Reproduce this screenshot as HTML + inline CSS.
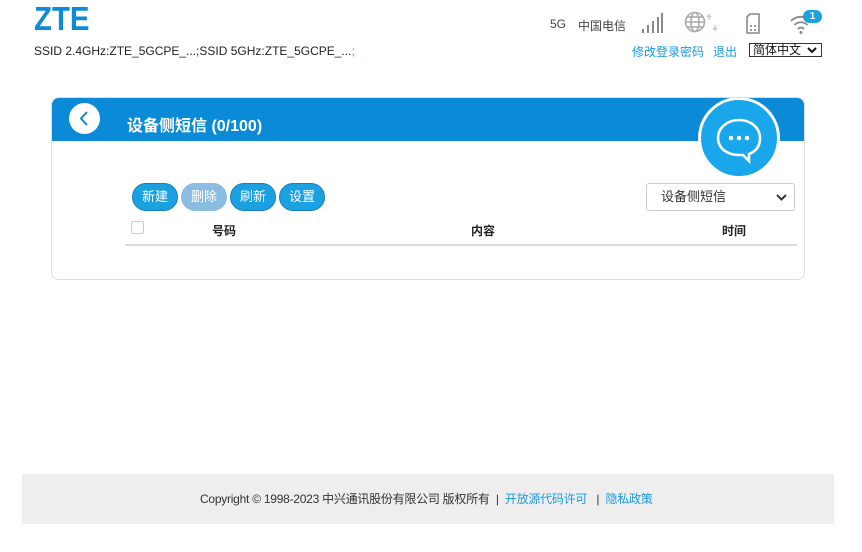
<!DOCTYPE html>
<html><head><meta charset="utf-8"><style>
*{margin:0;padding:0;box-sizing:border-box}
body{width:862px;height:552px;background:#fff;font-family:"Liberation Sans","Noto Sans CJK SC",sans-serif;position:relative;overflow:hidden;color:#333}
.a{position:absolute}
.logo{left:34px;top:0px;font-size:33px;line-height:38px;font-weight:bold;color:#0e8bd6;font-family:"Liberation Sans",sans-serif;transform:scaleX(0.89);transform-origin:left}
.ssid{left:34px;top:44px;font-size:12px;color:#222}
.ssid span{color:#1a9ae0}
.top{font-size:12px;color:#444}
.lk{font-size:12px;color:#1a9ae0}
.card{left:51px;top:97px;width:754px;height:183px;border:1px solid #ddd;border-radius:8px;overflow:hidden}
.hdr{left:0;top:0;width:754px;height:43px;background:#0b8bd7}
.btn{top:183px;height:28px;border-radius:14px;background:#1ba0e2;color:#fff;font-size:13px;text-align:center;line-height:26px;border:1px solid #1380c0}
</style></head><body>
<div class="a logo">ZTE</div>
<div class="a ssid">SSID 2.4GHz:ZTE_5GCPE_...;SSID 5GHz:ZTE_5GCPE_...<span>;</span></div>
<div class="a top" style="left:550px;top:17px">5G</div>
<div class="a top" style="left:578px;top:17px">中国电信</div>
<svg class="a" style="left:640px;top:12px" width="24" height="22"><g fill="#888"><rect x="2" y="17" width="2" height="4"/><rect x="7" y="13" width="2" height="8"/><rect x="12" y="9" width="2" height="12"/><rect x="17" y="5" width="2" height="16"/><rect x="21" y="1" width="2" height="20"/></g></svg>
<svg class="a" style="left:684px;top:11px" width="38" height="24"><g fill="none" stroke="#aaa" stroke-width="1.6"><circle cx="11" cy="11" r="9.5"/><ellipse cx="11" cy="11" rx="4" ry="9.5"/><line x1="1.5" y1="11" x2="20.5" y2="11"/><line x1="3" y1="6" x2="19" y2="6"/><line x1="3" y1="16" x2="19" y2="16"/></g><path d="M25 9v-5l-2 2M25 4l2 2M31 14v5l-2-2M31 19l2-2" stroke="#ccc" stroke-width="1.5" fill="none"/></svg>
<svg class="a" style="left:745px;top:13px" width="16" height="22"><path d="M5 1h9v19H2V4z" fill="none" stroke="#888" stroke-width="1.6"/><g fill="#999"><rect x="5" y="12" width="2" height="2"/><rect x="9" y="12" width="2" height="2"/><rect x="5" y="16" width="2" height="2"/><rect x="9" y="16" width="2" height="2"/></g></svg>
<svg class="a" style="left:789px;top:14px" width="24" height="20"><g fill="none" stroke="#888" stroke-width="1.8"><path d="M2 7a14 14 0 0 1 20 0"/><path d="M5.5 11a9 9 0 0 1 13 0"/><path d="M9 15a4 4 0 0 1 6 0"/></g><circle cx="12" cy="18.5" r="1.5" fill="#888"/></svg>
<div class="a" style="left:803px;top:10px;width:19px;height:13px;border-radius:7px;background:#1ba0e2;color:#fff;font-size:10px;font-weight:bold;text-align:center;line-height:13px">1</div>
<div class="a lk" style="left:632px;top:43px">修改登录密码</div>
<div class="a lk" style="left:713px;top:43px">退出</div>
<div class="a" style="left:749px;top:43px;width:73px;height:14px;border:1px solid #333;font-size:12px;line-height:12px;padding-left:3px;color:#111">简体中文<svg class="a" style="right:4px;top:3px" width="10" height="7"><path d="M1 1l4 4 4-4" stroke="#111" stroke-width="2" fill="none"/></svg></div>
<div class="a card">
<div class="a hdr"></div>
<div class="a" style="left:17px;top:5px;width:31px;height:31px;border-radius:50%;background:#fff"><svg width="31" height="31"><path d="M18 9l-6 6.5 6 6.5" stroke="#0b8bd7" stroke-width="2" fill="none"/></svg></div>
<div class="a" style="left:75px;top:14px;color:#fff;font-size:16px;font-weight:bold">设备侧短信 (0/100)</div>
<div class="a" style="left:646px;top:-1px;width:82px;height:82px;border-radius:50%;background:#1aa6ea;border:3px solid #fff"><svg width="76" height="76"><path d="M38 20c-12 0-21 8-21 18s9 17 21 17l4 0 6 6 0-7c8-3 11-9 11-16 0-10-9-18-21-18z" fill="none" stroke="#fff" stroke-width="2.6"/><circle cx="30" cy="38" r="2.3" fill="#fff"/><circle cx="38" cy="38" r="2.3" fill="#fff"/><circle cx="46" cy="38" r="2.3" fill="#fff"/></svg></div>
<div class="a" style="left:594px;top:85px;width:149px;height:28px;border:1px solid #ccc;border-radius:3px;font-size:13px;line-height:26px;padding-left:14px;color:#333">设备侧短信<svg class="a" style="right:7px;top:10px" width="11" height="7"><path d="M1 1l4.5 4.5L10 1" stroke="#333" stroke-width="2" fill="none"/></svg></div>
<div class="a" style="left:79px;top:123px;width:13px;height:13px;border:1px solid #ccc;border-radius:2px"></div>
<div class="a" style="left:160px;top:124px;font-size:12px;font-weight:bold;color:#222">号码</div>
<div class="a" style="left:419px;top:124px;font-size:12px;font-weight:bold;color:#222">内容</div>
<div class="a" style="left:670px;top:124px;font-size:12px;font-weight:bold;color:#222">时间</div>
<div class="a" style="left:73px;top:146px;width:672px;height:2px;background:#ddd"></div>
</div>
<div class="a btn" style="left:132px;width:46px">新建</div>
<div class="a btn" style="left:181px;width:46px;background:#8bbde0;border-color:#8bbde0">删除</div>
<div class="a btn" style="left:230px;width:46px">刷新</div>
<div class="a btn" style="left:279px;width:46px">设置</div>
<div class="a" style="left:22px;top:474px;width:812px;height:50px;background:#eee;font-size:12px;color:#333;line-height:50px;padding-left:178px;letter-spacing:-0.25px;white-space:nowrap">Copyright © 1998-2023 中兴通讯股份有限公司 版权所有 &nbsp;| &nbsp;<span style="color:#1a9ae0">开放源代码许可</span> &nbsp; | &nbsp;<span style="color:#1a9ae0">隐私政策</span></div>
</body></html>
